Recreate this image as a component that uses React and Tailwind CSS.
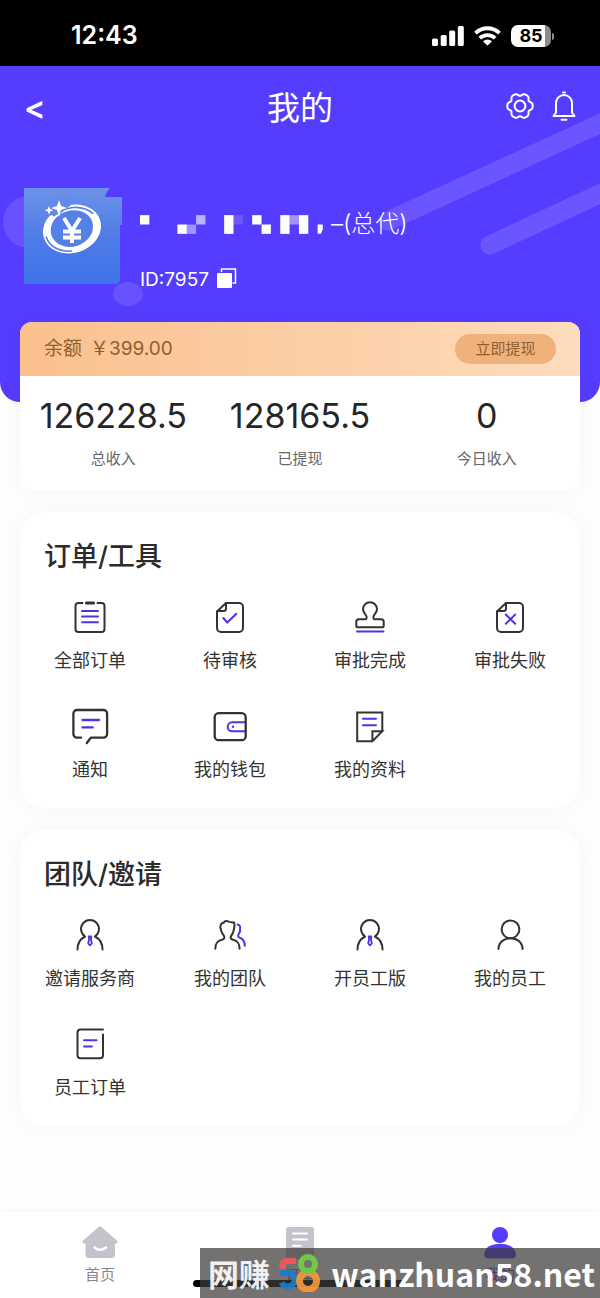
import React from 'react';

const DARK = '#333333';
const ACCENT = '#4b35e6';

const Icon = ({ children }) => (
  <svg
    viewBox="0 0 40 40"
    className="w-10 h-10"
    fill="none"
    stroke={DARK}
    strokeWidth="2"
    strokeLinecap="round"
    strokeLinejoin="round"
    aria-hidden="true"
  >
    {children}
  </svg>
);

const FoldedPage = () => (
  <>
    <path d="M16 6h13a4 4 0 0 1 4 4v21a4 4 0 0 1-4 4H11a4 4 0 0 1-4-4V14.500L16 6Z" />
    <path d="M16 6v5.500a2.500 2.500 0 0 1-2.500 2.500H7.500" />
  </>
);

const AllOrdersIcon = () => (
  <Icon>
    <path d="M12.500 6H8.500A3 3 0 0 0 5.500 9v23a3 3 0 0 0 3 3h23a3 3 0 0 0 3-3V9a3 3 0 0 0-3-3h-4" />
    <path d="M16.500 6h7" strokeWidth="3.200" />
    <path d="M12 14h16M12 19.500h16M12 25.300h16" stroke={ACCENT} />
  </Icon>
);

const PendingIcon = () => (
  <Icon>
    <FoldedPage />
    <path d="m13.300 21 4 4.500 9-8.700" stroke={ACCENT} />
  </Icon>
);

const ApprovedIcon = () => (
  <Icon>
    <path d="M7.500 30.200a1.200 1.200 0 0 1-1.200-1.200v-4.200a2.500 2.500 0 0 1 2.500-2.500h6.400c1.800 0 1.800-2.100.6-4.200-1.600-2.200-2.800-3.600-2.800-5.900a7 7 0 0 1 14 0c0 2.300-1.200 3.700-2.800 5.900-1.200 2.100-1.200 4.200.6 4.200h6.400a2.500 2.500 0 0 1 2.500 2.500V29a1.200 1.200 0 0 1-1.200 1.200Z" />
    <path d="M7 34.400h26.500" stroke={ACCENT} />
  </Icon>
);

const RejectedIcon = () => (
  <Icon>
    <FoldedPage />
    <path d="m15.800 17.500 9.400 9.200M25.200 17.500l-9.400 9.200" stroke={ACCENT} />
  </Icon>
);

const NoticeIcon = () => (
  <Icon>
    <path d="M11 31.700H7a3.600 3.600 0 0 1-3.600-3.600V7.600A3.600 3.600 0 0 1 7 4h26.500a3.600 3.600 0 0 1 3.600 3.600v20.500a3.600 3.600 0 0 1-3.600 3.600H20.800l-4 5.300" strokeWidth="2.300" />
    <path d="M12.500 14h16.500M12.500 21.400h10.200" stroke={ACCENT} strokeWidth="2.300" />
  </Icon>
);

const WalletIcon = () => (
  <Icon>
    <path d="M35 16.300H22.200a4.500 4.500 0 0 0 0 9H35" stroke={ACCENT} strokeLinecap="butt" />
    <circle cx="23" cy="20.800" r="1.200" fill={ACCENT} stroke="none" />
    <rect x="4.700" y="7.200" width="31" height="27" rx="4" strokeWidth="2.300" />
  </Icon>
);

const ProfileIcon = () => (
  <Icon>
    <path d="M32.300 25.300V6.500H7.200v28.700h15.200l9.900-9.900h-9.900v9.900" strokeLinejoin="miter" />
    <path d="M13 12.800h13M13 19.200h13" stroke={ACCENT} />
  </Icon>
);

const AgentIcon = () => (
  <Icon>
    <path d="M7.500 34.500c0-6.200 2.700-10.600 7.600-13a9 9 0 1 1 9.800 0c4.900 2.400 7.600 6.800 7.600 13" />
    <path d="M18.700 21.500h2.600l-.4 2.700.9 4.300-1.800 1.900-1.800-1.900.9-4.300Z" stroke={ACCENT} strokeWidth="1.800" />
  </Icon>
);

const TeamIcon = () => (
  <Icon>
    <path d="M5.300 33.700c0-5.500 1.800-7.600 6.500-8.900 2.200-.7 3.300-1.800 2.300-3.700-1.700-2.400-3.300-4.700-3.200-7.100-.8-1-.9-2-.3-3.500.4-1.800 1.200-2.600 3-2.700 1.200-2.300 3.500-2 5.700-.9 2 .6 3.300.4 4.900.6.400 2.200.3 4.100-.2 6.300-.3 2.700-1.100 5-2.900 7.200-1.200 2-.2 3.100 2 3.800 4.700 1.300 6.500 3.400 6.500 8.900" />
    <path d="M27.500 9.500c2.500.5 3 2.300 2.500 4.500.6 2-.2 3.600-1.500 5.500-.9 1.600-.3 2.400 1.300 3.200 3.500 1.300 5 3.500 5 8" stroke={ACCENT} />
  </Icon>
);

const StaffIcon = () => (
  <Icon>
    <circle cx="20.500" cy="14.300" r="8.900" />
    <path d="M8.500 34c0-6.200 5-10.800 12-10.800s12 4.600 12 10.800" />
  </Icon>
);

const StaffOrdersIcon = () => (
  <Icon>
    <path d="M33 5.500H10.500a3 3 0 0 0-3 3v22.800a3 3 0 0 0 3 3H30a3 3 0 0 0 3-3V10.500" />
    <path d="M14 16.200h12.500M14 22.400h8" stroke={ACCENT} />
  </Icon>
);

const orderTools = [
  { label: '全部订单', icon: AllOrdersIcon },
  { label: '待审核', icon: PendingIcon },
  { label: '审批完成', icon: ApprovedIcon },
  { label: '审批失败', icon: RejectedIcon },
  { label: '通知', icon: NoticeIcon },
  { label: '我的钱包', icon: WalletIcon },
  { label: '我的资料', icon: ProfileIcon },
];

const teamTools = [
  { label: '邀请服务商', icon: AgentIcon },
  { label: '我的团队', icon: TeamIcon },
  { label: '开员工版', icon: AgentIcon },
  { label: '我的员工', icon: StaffIcon },
  { label: '员工订单', icon: StaffOrdersIcon },
];

const income = [
  { label: '总收入', value: '126228.5' },
  { label: '已提现', value: '128165.5' },
  { label: '今日收入', value: '0' },
];

// Six-toothed outline for the settings gear
const gearPoints = Array.from({ length: 90 }, (_, i) => {
  const a = (i / 90) * Math.PI * 2;
  const r = 11.7 + 1.3 * Math.cos(6 * a) - 0.3 * Math.cos(12 * a);
  return `${(14 + r * Math.cos(a)).toFixed(2)},${(14 + r * Math.sin(a)).toFixed(2)}`;
}).join(' ');

// Blocks of the masked user name: column, row, height, opacity
const maskBlocks = [
  [0, 0, 1, 1], [4, 1, 1, 1], [5, 1, 1, 0.45], [6, 0, 1, 0.6],
  [9, 0, 2, 1], [10, 0, 1, 0.15], [12, 0, 1, 1], [13, 1, 1, 1],
  [15, 0, 2, 1], [16, 0, 1, 0.45], [17, 0, 2, 1],
];

const StatusBar = () => (
  <div className="flex items-center justify-between h-[66px] pt-1.5 pl-[71px] pr-[46px] bg-black text-white">
    <span className="text-[25px] font-semibold">12:43</span>
    <div className="flex items-center gap-[10px]">
      <svg viewBox="0 0 32 20" className="w-8 h-5" fill="white" aria-hidden="true">
        <rect x="0" y="12.500" width="6" height="7.500" rx="1.500" />
        <rect x="8.700" y="9" width="6" height="11" rx="1.500" />
        <rect x="17.200" y="4.500" width="6" height="15.500" rx="1.500" />
        <rect x="25.800" y="0" width="6" height="20" rx="1.500" />
      </svg>
      <svg viewBox="0 0 27 20" className="w-[27px] h-5" fill="none" stroke="white" strokeWidth="3.800" aria-hidden="true">
        <path d="M1.500 7.200a17 17 0 0 1 24 0" />
        <path d="M5.800 12.200a11 11 0 0 1 15.400 0" />
        <path d="M13.500 19.800 9 15.300a6.500 6.500 0 0 1 9 0Z" fill="white" stroke="none" />
      </svg>
      <div className="flex items-center gap-px">
        <div className="flex items-center justify-center w-10 h-[22px] rounded-[7px] bg-linear-to-r from-white from-85% to-[#8c8c8c] to-85% text-black text-lg font-bold">
          85
        </div>
        <div className="w-[2px] h-[7px] rounded-r bg-[#8c8c8c]" />
      </div>
    </div>
  </div>
);

const Avatar = () => (
  <svg viewBox="0 0 98 96" className="w-[98px] h-24 shrink-0" role="img" aria-label="头像">
    <defs>
      <linearGradient id="avatar" x1="0" y1="0" x2="0" y2="1">
        <stop offset="0" stopColor="#6d92ea" />
        <stop offset="0.500" stopColor="#4f7ce6" />
        <stop offset="1" stopColor="#3f73ea" />
      </linearGradient>
    </defs>
    <path d="M0 0h86q-4 4-5 9h17v28h-2v54q0 5-5 5H0Z" fill="url(#avatar)" />
    <g transform="rotate(-18 48 41)">
      <ellipse cx="48" cy="41" rx="29.500" ry="24" fill="white" />
      <ellipse cx="48" cy="40.500" rx="21.500" ry="18" fill="#5580e7" />
      <path d="M34 23c14-6 31-3 39 10" fill="none" stroke="#5580e7" strokeWidth="1.600" />
      <path d="M21 40c0 11 8 19 20 22" fill="none" stroke="#5580e7" strokeWidth="1.600" />
    </g>
    <path d="m28 12 14-3 5 8-11 9-12 2Z" fill="#6489e8" />
    <path d="m35 12 2 6 6 2-6 2-2 7-2-7-6-2 6-2ZM25 18l1.200 3 3 1.200-3 1.200-1.200 3.200-1.200-3.200-3-1.200 3-1.200Z" fill="white" />
    <path d="m40 30 8 13 8-13M39 43.500h18M39 49.500h18M48 43v12" fill="none" stroke="white" strokeWidth="4" />
  </svg>
);

const Header = () => (
  <header className="relative overflow-hidden rounded-b-[20px] bg-[#543dfe] text-white">
    {/* Background shapes */}
    <svg
      viewBox="0 0 600 336"
      preserveAspectRatio="xMaxYMin slice"
      className="absolute inset-0 w-full h-full"
      aria-hidden="true"
    >
      <g fill="#6852ff">
        <circle cx="29" cy="156" r="26" />
        <ellipse cx="128" cy="228" rx="15" ry="12" />
      </g>
      <g stroke="#6a55ff" strokeWidth="19" strokeLinecap="round">
        <path d="m388 155 222-102M490 179l120-56" />
      </g>
    </svg>

    <div className="relative px-6">
      <div className="grid grid-cols-3 items-center h-20 pt-1">
        <button type="button" aria-label="返回" className="justify-self-start text-[32px] leading-8 font-semibold">
          &lt;
        </button>
        <h1 className="text-center text-[33px] leading-10">我的</h1>
        <div className="flex items-center justify-end gap-[18px] pb-1">
          <button type="button" aria-label="设置">
            <svg viewBox="0 0 28 28" className="w-7 h-7" fill="none" stroke="white" strokeWidth="2">
              <polygon points={gearPoints} />
              <circle cx="14" cy="14" r="5.400" />
            </svg>
          </button>
          <button type="button" aria-label="消息">
            <svg viewBox="0 0 24 30" className="w-6 h-[30px]" fill="none" stroke="white" strokeWidth="2" strokeLinecap="round" strokeLinejoin="round">
              <path d="M4 21.500V12a8 8 0 0 1 16 0v9.500l2.500 3.500h-21Z" />
              <path d="M11 1.500h2M9.500 28.800h5" />
            </svg>
          </button>
        </div>
      </div>

      <div className="flex gap-[18px] pt-[42px] pb-[108px]">
        <Avatar />
        <div className="pt-[18px]">
          <div className="flex items-center gap-1 h-9">
            <svg viewBox="0 0 20 2" className="w-[187px] h-[19px]" fill="white" aria-hidden="true">
              {maskBlocks.map(([x, y, h, o]) => (
                <rect key={`${x}-${y}`} x={x} y={y} width="1" height={h} opacity={o} />
              ))}
              <path d="M19 1h.55v.5l-.2.5H19Z" />
            </svg>
            <span className="text-2xl font-light">–(总代)</span>
          </div>
          <div className="flex items-center gap-2 h-7 mt-6">
            <span className="text-[19px]">ID:7957</span>
            <button type="button" aria-label="复制">
              <svg viewBox="0 0 20 20" className="w-5 h-5 -mt-1" aria-hidden="true">
                <path d="M4.500 4V1h14v14h-3" fill="none" stroke="white" strokeWidth="1.500" />
                <rect x="0" y="5" width="15" height="15" rx="1" fill="white" />
              </svg>
            </button>
          </div>
        </div>
      </div>
    </div>
  </header>
);

const BalanceCard = () => (
  <section className="overflow-hidden rounded-xl bg-white shadow-[0_0_24px_rgba(0,0,0,0.04)]">
    <div className="flex items-center justify-between h-[54px] px-6 bg-linear-to-r from-[#fac08d] to-[#fddcbd] text-[#8f5e2f]">
      <div className="text-[19px]">
        <span className="mr-2">余额</span>￥399.00
      </div>
      <button type="button" className="w-[101px] h-[30px] rounded-full bg-[#efb27c] text-[15px]">
        立即提现
      </button>
    </div>
    <dl className="grid grid-cols-3 pt-4 pb-[19px] text-center">
      {income.map((item) => (
        <div key={item.label} className="flex flex-col-reverse gap-[7px]">
          <dt className="text-[15px] leading-6 text-[#666666]">{item.label}</dt>
          <dd className="text-[34px] leading-[48px] text-[#262626]">{item.value}</dd>
        </div>
      ))}
    </dl>
  </section>
);

const ToolCard = ({ title, items }) => (
  <section className="py-6 rounded-3xl bg-white shadow-[0_0_24px_rgba(0,0,0,0.04)]">
    <h2 className="px-6 text-[27px] leading-[42px] font-medium text-[#2b2b2b]">{title}</h2>
    <div className="grid grid-cols-4 gap-y-[31px] mt-[19px]">
      {items.map(({ label, icon: ItemIcon }) => (
        <button key={label} type="button" className="flex flex-col items-center gap-[10px]">
          <ItemIcon />
          <span className="text-lg leading-7 text-[#333333]">{label}</span>
        </button>
      ))}
    </div>
  </section>
);

const TabBar = () => (
  <nav className="relative mt-auto bg-white shadow-[0_0_8px_rgba(0,0,0,0.05)]">
    <div className="grid grid-cols-3 pt-3 pb-[11px] text-[15px] leading-6 text-[#888888]">
      <a href="#home" className="flex flex-col items-center gap-px">
        <svg viewBox="0 0 38 38" className="w-[38px] h-[38px]" fill="#c4c3cd" aria-hidden="true">
          <path d="M17 3.500a3 3 0 0 1 4 0l15 13.300c1.300 1.300.8 2.700-.8 2.700H34V31a3 3 0 0 1-3 3H7.500a3 3 0 0 1-3-3V19.500H2.800c-1.600 0-2.100-1.400-.8-2.700Z" />
          <path d="M13.500 23.500q5.500 4.500 11.500 0" fill="none" stroke="white" strokeWidth="2.600" strokeLinecap="round" />
        </svg>
        首页
      </a>
      <a href="#orders" className="flex flex-col items-center gap-px">
        <svg viewBox="0 0 38 38" className="w-[38px] h-[38px]" fill="#c4c3cd" aria-hidden="true">
          <rect x="5" y="3" width="28" height="32" rx="2.500" />
          <path d="M12 9.400h14M12 15.500h14M12 21.700h7.500" fill="none" stroke="white" strokeWidth="2" strokeLinecap="round" />
        </svg>
        订单
      </a>
      <a href="#mine" aria-current="page" className="flex flex-col items-center gap-px text-[#543dfe]">
        <svg viewBox="0 0 38 38" className="w-[38px] h-[38px]" fill="#543dfe" aria-hidden="true">
          <circle cx="19" cy="11" r="8" />
          <path d="M3.300 30.500C3.300 23 11 19.700 19 19.700S34.900 23 34.900 30.500c0 2.700-1.200 4-3.600 4H7c-2.500 0-3.700-1.300-3.700-4Z" />
        </svg>
        我的
      </a>
    </div>

    {/* Home indicator */}
    <div className="absolute bottom-[11px] left-1/2 w-[214px] h-[7px] -translate-x-1/2 rounded-full bg-black" />

    {/* Site badge */}
    <div className="absolute bottom-0 right-0 w-2/3 h-[50px] flex items-center justify-between pl-2 pr-[5px] bg-[rgba(62,60,58,0.72)] text-white font-['Noto_Sans_CJK_SC',sans-serif] leading-[50px] font-bold whitespace-nowrap">
      <div className="flex items-center gap-2 opacity-90">
        <span className="text-[31px]">网赚</span>
        <svg viewBox="0 0 42 38" className="w-[42px] h-[38px]" fill="none" strokeWidth="6" aria-hidden="true">
          <path d="M18 7H8.500q-4 0-4 4v5" stroke="#f9545b" />
          <path d="M1.500 18.500H10a7 7 0 1 1-6.500 10" stroke="#1580c8" />
          <circle cx="30" cy="27" r="8.500" strokeWidth="7" stroke="#f79a3c" />
          <circle cx="30" cy="10" r="7" strokeWidth="6" stroke="#74d147" />
        </svg>
      </div>
      <span className="text-[32px]">wanzhuan58.net</span>
    </div>
  </nav>
);

const App = () => (
  <div className="flex flex-col min-h-screen bg-[#fefefe] font-['Inter','Noto_Sans_CJK_SC',sans-serif]">
    <StatusBar />
    <Header />
    <main className="relative flex flex-col gap-[22px] px-5 pb-6 -mt-20">
      <BalanceCard />
      <ToolCard title="订单/工具" items={orderTools} />
      <ToolCard title="团队/邀请" items={teamTools} />
    </main>
    <TabBar />
  </div>
);

export default App;
